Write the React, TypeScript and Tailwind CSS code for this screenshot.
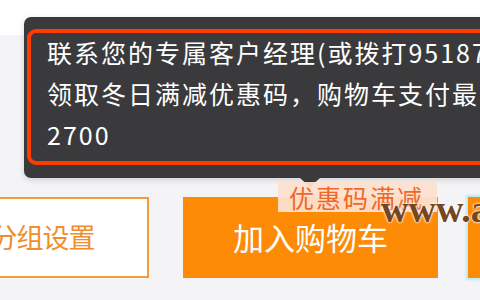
export default function App() {
  return (
    <div className="relative h-[300px] w-[480px] overflow-hidden bg-[#f4f4f6] font-['Noto_Sans_CJK_SC',sans-serif]">
      <div className="h-[35px] bg-white" />

      {/* action buttons */}
      <div className="mt-[162px] flex h-[81px] gap-[30px]">
        <button className="ml-[-56px] mr-[4px] flex w-[205px] shrink-0 items-center justify-center border-2 border-[#f39a3c] bg-white pr-[8px] text-[27px] tracking-[-1px] text-[#f08d2c]">
          分组设置
        </button>
        <button className="flex w-[255px] shrink-0 items-center justify-center bg-[#fd8b06] text-[31px] text-white">
          加入购物车
        </button>
        <button className="w-[60px] shrink-0 bg-[#fd8b06] shadow-[0_0_2px_2px_#b5ecf6]" />
      </div>

      {/* tooltip */}
      <div className="absolute left-[24px] top-[17px] h-[161px] w-[500px] rounded-[7px] bg-[#3a3a3c] shadow-[0_2px_6px_rgba(0,0,0,0.15)]">
        <div className="absolute bottom-[13px] left-[3px] top-[12px] w-[520px] rounded-[9px] border-4 border-[#ff3c00]" />
        <div className="relative whitespace-nowrap pl-[23px] pt-[15px] text-[25px] leading-[41px] tracking-[2px] text-white">
          <div>联系您的专属客户经理(或拨打95187)</div>
          <div>领取冬日满减优惠码，购物车支付最高减</div>
          <div>2700</div>
        </div>
      </div>
      <div className="absolute left-[300px] top-[178px] h-0 w-0 border-x-[10px] border-t-[9px] border-x-transparent border-t-[#3a3a3c]" />

      {/* tag */}
      <div className="absolute left-[278px] top-[182px] flex h-[30px] w-[159px] items-center bg-[#fde0cf]/95 pl-[11px] text-[25px] leading-none tracking-[2px] text-[#f0672a]">
        优惠码满减
      </div>

      {/* watermark */}
      <div className="absolute left-[381px] top-[190px] whitespace-nowrap font-['Liberation_Serif',serif] text-[38px] font-bold leading-none text-[#744621] [text-shadow:0_0_2px_#fff,0_0_3px_#fff,0_0_1px_#fff]">
        www.a
      </div>
    </div>
  )
}
